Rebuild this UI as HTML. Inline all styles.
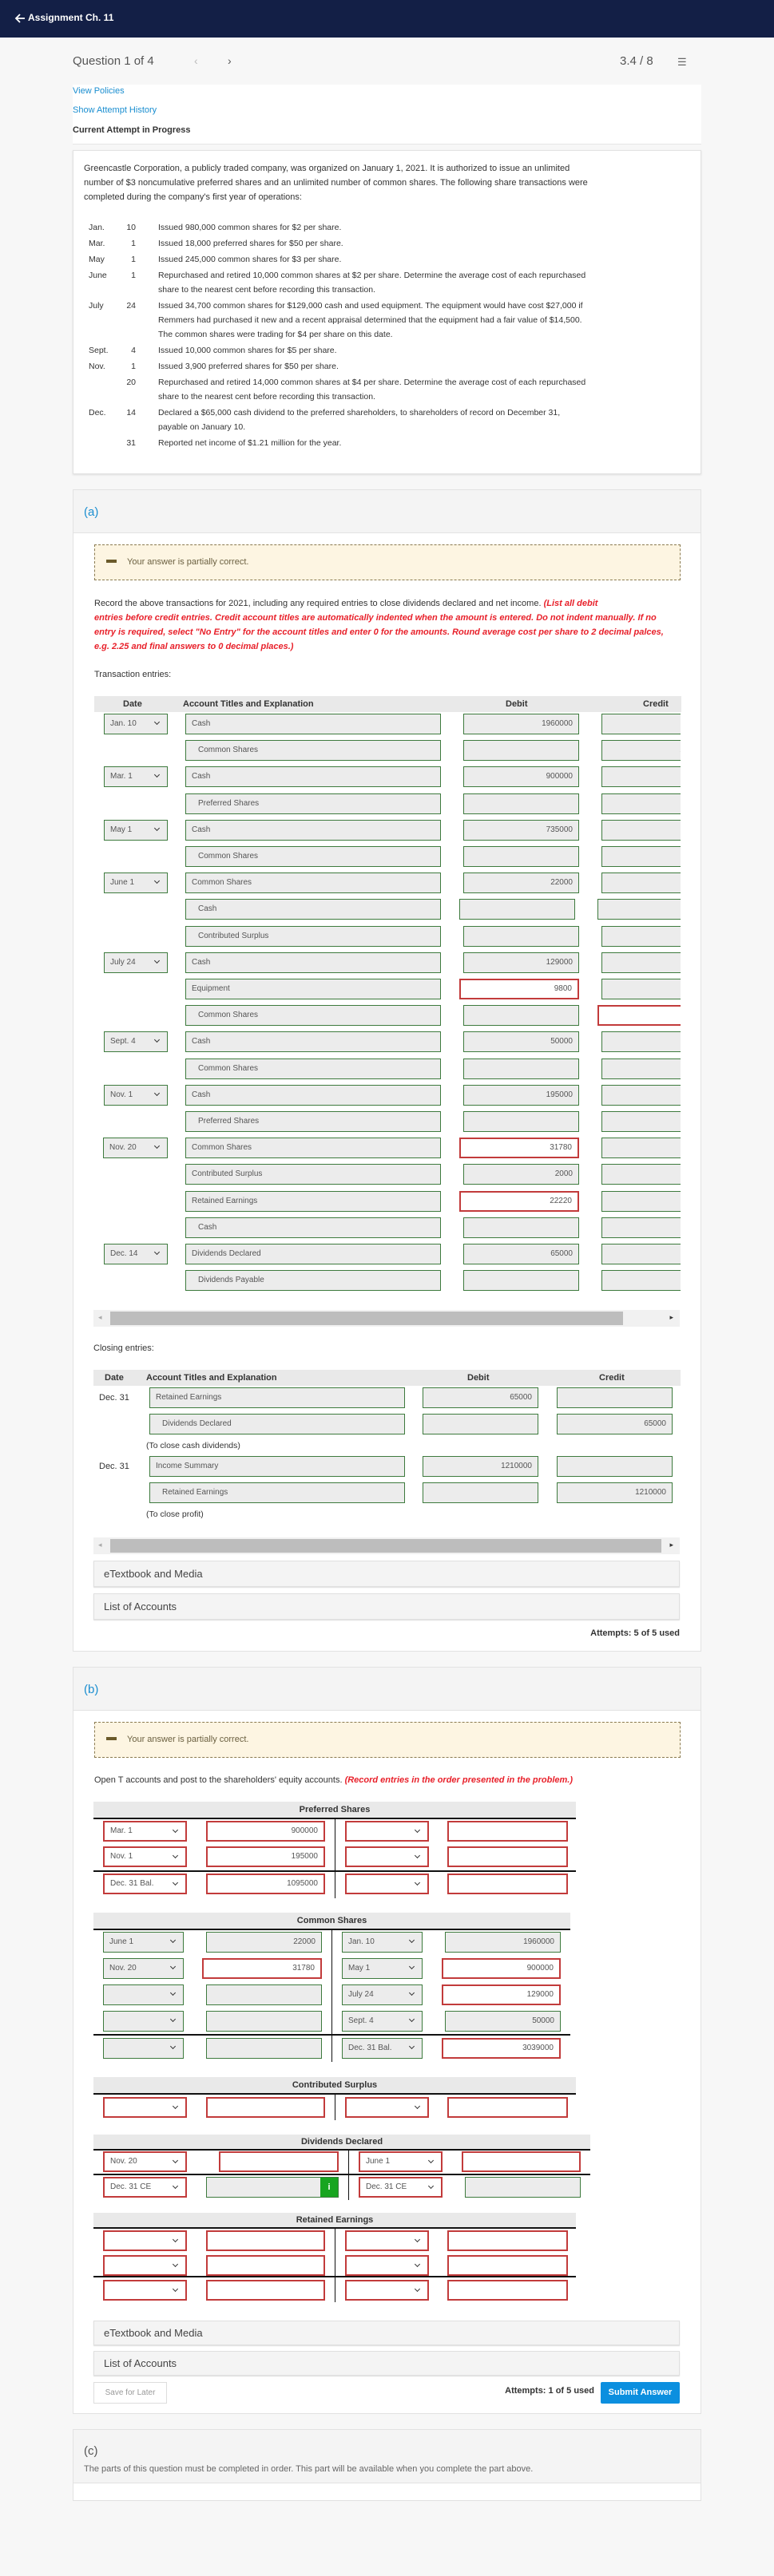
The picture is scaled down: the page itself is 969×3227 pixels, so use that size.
<!DOCTYPE html>
<html><head><meta charset="utf-8"><style>
*{margin:0;padding:0;box-sizing:border-box}
body{width:969px;height:3227px;background:#f7f7f7;font-family:"Liberation Sans",Arial,sans-serif;color:#333;position:relative;overflow:hidden}
.a{position:absolute}
.nav{left:0;top:0;width:969px;height:47px;background:#131f46;color:#fff}
.card{position:absolute;left:91px;width:787px;background:#fff;border:1px solid #e2e2e2}
.hd{position:absolute;left:0;right:0;top:0;background:#f4f4f4;border-bottom:1px solid #e2e2e2}
.in{position:absolute;height:26px;border:1px solid #3d7a3d;background:#ececec;font-size:10px;color:#555;line-height:24px;padding:0 7px;white-space:nowrap;overflow:hidden}
.r{border:2px solid #c23b3b;background:#fff;line-height:22px}
.n{text-align:right}
.ind{padding-left:15px}
.chev{position:absolute;right:10px;top:7px;width:5px;height:5px;border-right:1.6px solid #333;border-bottom:1.6px solid #333;transform:rotate(45deg)}
.partial{position:absolute;left:26px;width:734px;height:45px;border:1px dashed #8a7a50;background:#fdf5e2;font-size:11px;color:#6b6040}
.partial b{position:absolute;left:14px;top:18px;width:13px;height:4px;background:#6b5a2a}
.partial span{position:absolute;left:40px;top:15px}
.th{position:absolute;background:#e9e9e9;font-size:11px;font-weight:bold;height:20px;line-height:20px}
.tt{position:absolute;background:#e9e9e9;border-bottom:2px solid #111;font-size:11px;font-weight:bold;text-align:center;line-height:20px}
.vl{position:absolute;width:1px;background:#111}
.hl{position:absolute;height:2px;background:#111}
.acc{position:absolute;left:26px;width:734px;background:#f4f4f4;border:1px solid #e0e0e0;font-size:13px;color:#444;padding-left:12px;box-shadow:0 1px 1px #ddd}
.sb{position:absolute;left:26px;width:734px;height:21px;background:#f1f1f1}
.sb i{position:absolute;left:21px;top:2px;height:17px;background:#bdbdbd}
.tx{font-size:11px;line-height:18px}
</style></head><body>
<div class="a nav"><svg class="a" style="left:18px;top:16px" width="14" height="14" viewBox="0 0 14 14"><path d="M13 7H2M7 2L2 7l5 5" stroke="#fff" stroke-width="1.8" fill="none"/></svg><div class="a" style="left:35px;top:15px;font-size:12px;font-weight:bold">Assignment Ch. 11</div></div>
<div class="a" style="left:91px;top:68px;font-size:15px;color:#555">Question 1 of 4</div>
<div class="a" style="left:243px;top:68px;font-size:14px;color:#bbb">‹</div>
<div class="a" style="left:285px;top:68px;font-size:14px;color:#555">›</div>
<div class="a" style="left:776px;top:68px;font-size:15px;color:#555">3.4 / 8</div>
<div class="a" style="left:848px;top:70px;font-size:13px;color:#666">☰</div>
<div class="a" style="left:91px;top:106px;width:787px;height:75px;background:#fff;border-bottom:1px solid #e6e6e6"></div>
<div class="a" style="left:91px;top:108px;font-size:11px;color:#1a8ed0">View Policies</div>
<div class="a" style="left:91px;top:132px;font-size:11px;color:#1a8ed0">Show Attempt History</div>
<div class="a" style="left:91px;top:157px;font-size:11px;font-weight:bold;color:#333">Current Attempt in Progress</div>

<div class="card" style="top:188px;height:406px;box-shadow:0 1px 2px #ddd">
<div class="a tx" style="left:13px;top:13px;white-space:nowrap">Greencastle Corporation, a publicly traded company, was organized on January 1, 2021. It is authorized to issue an unlimited<br>number of $3 noncumulative preferred shares and an unlimited number of common shares. The following share transactions were<br>completed during the company's first year of operations:</div>
<div class="a" style="left:19px;top:87px;font-size:10.5px;line-height:18px;white-space:nowrap">
<div style="position:relative;height:20px"><span class="a">Jan.</span><span class="a" style="left:39px;width:20px;text-align:right">10</span><span class="a" style="left:87px">Issued 980,000 common shares for $2 per share.</span></div>
<div style="position:relative;height:20px"><span class="a">Mar.</span><span class="a" style="left:39px;width:20px;text-align:right">1</span><span class="a" style="left:87px">Issued 18,000 preferred shares for $50 per share.</span></div>
<div style="position:relative;height:20px"><span class="a">May</span><span class="a" style="left:39px;width:20px;text-align:right">1</span><span class="a" style="left:87px">Issued 245,000 common shares for $3 per share.</span></div>
<div style="position:relative;height:38px"><span class="a">June</span><span class="a" style="left:39px;width:20px;text-align:right">1</span><span class="a" style="left:87px">Repurchased and retired 10,000 common shares at $2 per share. Determine the average cost of each repurchased<br>share to the nearest cent before recording this transaction.</span></div>
<div style="position:relative;height:56px"><span class="a">July</span><span class="a" style="left:39px;width:20px;text-align:right">24</span><span class="a" style="left:87px">Issued 34,700 common shares for $129,000 cash and used equipment. The equipment would have cost $27,000 if<br>Remmers had purchased it new and a recent appraisal determined that the equipment had a fair value of $14,500.<br>The common shares were trading for $4 per share on this date.</span></div>
<div style="position:relative;height:20px"><span class="a">Sept.</span><span class="a" style="left:39px;width:20px;text-align:right">4</span><span class="a" style="left:87px">Issued 10,000 common shares for $5 per share.</span></div>
<div style="position:relative;height:20px"><span class="a">Nov.</span><span class="a" style="left:39px;width:20px;text-align:right">1</span><span class="a" style="left:87px">Issued 3,900 preferred shares for $50 per share.</span></div>
<div style="position:relative;height:38px"><span class="a" style="left:39px;width:20px;text-align:right">20</span><span class="a" style="left:87px">Repurchased and retired 14,000 common shares at $4 per share. Determine the average cost of each repurchased<br>share to the nearest cent before recording this transaction.</span></div>
<div style="position:relative;height:38px"><span class="a">Dec.</span><span class="a" style="left:39px;width:20px;text-align:right">14</span><span class="a" style="left:87px">Declared a $65,000 cash dividend to the preferred shareholders, to shareholders of record on December 31,<br>payable on January 10.</span></div>
<div style="position:relative;height:20px"><span class="a" style="left:39px;width:20px;text-align:right">31</span><span class="a" style="left:87px">Reported net income of $1.21 million for the year.</span></div>
</div>
</div>

<!-- (a) -->
<div class="card" style="top:613px;height:1456px">
<div class="hd" style="height:54px"><div class="a" style="left:13px;top:19px;font-size:15px;color:#1a8ed0">(a)</div></div>
<div class="partial" style="top:68px"><b></b><span>Your answer is partially correct.</span></div>
<div class="a tx" style="left:26px;top:133px;width:740px;white-space:nowrap">Record the above transactions for 2021, including any required entries to close dividends declared and net income. <i style="color:#e8202a;font-weight:bold">(List all debit<br>entries before credit entries. Credit account titles are automatically indented when the amount is entered. Do not indent manually. If no<br>entry is required, select "No Entry" for the account titles and enter 0 for the amounts. Round average cost per share to 2 decimal palces,<br>e.g. 2.25 and final answers to 0 decimal places.)</i></div>
<div class="a" style="left:26px;top:225px;font-size:11px">Transaction entries:</div>
<div class="th" style="left:26px;top:258px;width:735px"><span class="a" style="left:36px">Date</span><span class="a" style="left:111px">Account Titles and Explanation</span><span class="a" style="left:515px">Debit</span><span class="a" style="left:687px">Credit</span></div>
</div>

<div id="tr">
<div class="in" style="left:130px;top:894px;width:80px">Jan. 10<i class="chev"></i></div><div class="in" style="left:232px;top:894px;width:320px">Cash</div><div class="in n" style="left:580px;top:894px;width:145px">1960000</div>
<div class="in ind" style="left:232px;top:927px;width:320px">Common Shares</div><div class="in" style="left:580px;top:927px;width:145px"></div>
<div class="in" style="left:130px;top:960px;width:80px">Mar. 1<i class="chev"></i></div><div class="in" style="left:232px;top:960px;width:320px">Cash</div><div class="in n" style="left:580px;top:960px;width:145px">900000</div>
<div class="in ind" style="left:232px;top:994px;width:320px">Preferred Shares</div><div class="in" style="left:580px;top:994px;width:145px"></div>
<div class="in" style="left:130px;top:1027px;width:80px">May 1<i class="chev"></i></div><div class="in" style="left:232px;top:1027px;width:320px">Cash</div><div class="in n" style="left:580px;top:1027px;width:145px">735000</div>
<div class="in ind" style="left:232px;top:1060px;width:320px">Common Shares</div><div class="in" style="left:580px;top:1060px;width:145px"></div>
<div class="in" style="left:130px;top:1093px;width:80px">June 1<i class="chev"></i></div><div class="in" style="left:232px;top:1093px;width:320px">Common Shares</div><div class="in n" style="left:580px;top:1093px;width:145px">22000</div>
<div class="in ind" style="left:232px;top:1126px;width:320px">Cash</div><div class="in" style="left:575px;top:1126px;width:145px"></div>
<div class="in ind" style="left:232px;top:1160px;width:320px">Contributed Surplus</div><div class="in" style="left:580px;top:1160px;width:145px"></div>
<div class="in" style="left:130px;top:1193px;width:80px">July 24<i class="chev"></i></div><div class="in" style="left:232px;top:1193px;width:320px">Cash</div><div class="in n" style="left:580px;top:1193px;width:145px">129000</div>
<div class="in" style="left:232px;top:1226px;width:320px">Equipment</div><div class="in n r" style="left:575px;top:1226px;width:150px">9800</div>
<div class="in ind" style="left:232px;top:1259px;width:320px">Common Shares</div><div class="in" style="left:580px;top:1259px;width:145px"></div>
<div class="in" style="left:130px;top:1292px;width:80px">Sept. 4<i class="chev"></i></div><div class="in" style="left:232px;top:1292px;width:320px">Cash</div><div class="in n" style="left:580px;top:1292px;width:145px">50000</div>
<div class="in ind" style="left:232px;top:1326px;width:320px">Common Shares</div><div class="in" style="left:580px;top:1326px;width:145px"></div>
<div class="in" style="left:130px;top:1359px;width:80px">Nov. 1<i class="chev"></i></div><div class="in" style="left:232px;top:1359px;width:320px">Cash</div><div class="in n" style="left:580px;top:1359px;width:145px">195000</div>
<div class="in ind" style="left:232px;top:1392px;width:320px">Preferred Shares</div><div class="in" style="left:580px;top:1392px;width:145px"></div>
<div class="in" style="left:129px;top:1425px;width:81px">Nov. 20<i class="chev"></i></div><div class="in" style="left:232px;top:1425px;width:320px">Common Shares</div><div class="in n r" style="left:575px;top:1425px;width:150px">31780</div>
<div class="in" style="left:232px;top:1458px;width:320px">Contributed Surplus</div><div class="in n" style="left:580px;top:1458px;width:145px">2000</div>
<div class="in" style="left:232px;top:1492px;width:320px">Retained Earnings</div><div class="in n r" style="left:575px;top:1492px;width:150px">22220</div>
<div class="in ind" style="left:232px;top:1525px;width:320px">Cash</div><div class="in" style="left:580px;top:1525px;width:145px"></div>
<div class="in" style="left:130px;top:1558px;width:80px">Dec. 14<i class="chev"></i></div><div class="in" style="left:232px;top:1558px;width:320px">Dividends Declared</div><div class="in n" style="left:580px;top:1558px;width:145px">65000</div>
<div class="in ind" style="left:232px;top:1591px;width:320px">Dividends Payable</div><div class="in" style="left:580px;top:1591px;width:145px"></div>
<div class="a" style="left:748px;top:890px;width:104px;height:730px;overflow:hidden">
<div class="in n" style="left:5px;top:4px;width:145px"></div>
<div class="in n" style="left:5px;top:37px;width:145px">1960000</div>
<div class="in n" style="left:5px;top:70px;width:145px"></div>
<div class="in n" style="left:5px;top:104px;width:145px">900000</div>
<div class="in n" style="left:5px;top:137px;width:145px"></div>
<div class="in n" style="left:5px;top:170px;width:145px">735000</div>
<div class="in n" style="left:5px;top:203px;width:145px"></div>
<div class="in n" style="left:0px;top:236px;width:145px">20000</div>
<div class="in n" style="left:5px;top:270px;width:145px"></div>
<div class="in n" style="left:5px;top:303px;width:145px"></div>
<div class="in n" style="left:5px;top:336px;width:145px"></div>
<div class="in n r" style="left:0px;top:369px;width:150px">138800</div>
<div class="in n" style="left:5px;top:402px;width:145px"></div>
<div class="in n" style="left:5px;top:436px;width:145px"></div>
<div class="in n" style="left:5px;top:469px;width:145px"></div>
<div class="in n" style="left:5px;top:502px;width:145px">195000</div>
<div class="in n" style="left:5px;top:535px;width:145px"></div>
<div class="in n" style="left:5px;top:568px;width:145px"></div>
<div class="in n" style="left:5px;top:602px;width:145px"></div>
<div class="in n" style="left:5px;top:635px;width:145px"></div>
<div class="in n" style="left:5px;top:668px;width:145px"></div>
<div class="in n" style="left:5px;top:701px;width:145px"></div>
</div>
</div>

<div class="sb" style="left:117px;top:1641px"><i style="width:642px"></i><span class="a" style="left:6px;top:4px;font-size:9px;color:#aaa">◂</span><span class="a" style="right:8px;top:4px;font-size:9px;color:#333">▸</span></div>
<div class="a" style="left:117px;top:1683px;font-size:11px">Closing entries:</div>
<div class="th" style="left:117px;top:1716px;width:735px"><span class="a" style="left:14px">Date</span><span class="a" style="left:66px">Account Titles and Explanation</span><span class="a" style="left:468px">Debit</span><span class="a" style="left:633px">Credit</span></div>
<div class="a" style="left:124px;top:1745px;font-size:11px">Dec. 31</div>
<div class="in" style="left:187px;top:1738px;width:320px">Retained Earnings</div><div class="in n" style="left:529px;top:1738px;width:145px">65000</div><div class="in" style="left:697px;top:1738px;width:145px"></div>
<div class="in ind" style="left:187px;top:1771px;width:320px">Dividends Declared</div><div class="in" style="left:529px;top:1771px;width:145px"></div><div class="in n" style="left:697px;top:1771px;width:145px">65000</div>
<div class="a" style="left:183px;top:1805px;font-size:10.5px">(To close cash dividends)</div>
<div class="a" style="left:124px;top:1831px;font-size:11px">Dec. 31</div>
<div class="in" style="left:187px;top:1824px;width:320px">Income Summary</div><div class="in n" style="left:529px;top:1824px;width:145px">1210000</div><div class="in" style="left:697px;top:1824px;width:145px"></div>
<div class="in ind" style="left:187px;top:1857px;width:320px">Retained Earnings</div><div class="in" style="left:529px;top:1857px;width:145px"></div><div class="in n" style="left:697px;top:1857px;width:145px">1210000</div>
<div class="a" style="left:183px;top:1891px;font-size:10.5px">(To close profit)</div>
<div class="sb" style="left:117px;top:1926px"><i style="width:690px"></i><span class="a" style="left:6px;top:4px;font-size:9px;color:#aaa">◂</span><span class="a" style="right:8px;top:4px;font-size:9px;color:#333">▸</span></div>
<div class="acc" style="left:117px;top:1955px;height:33px;line-height:31px">eTextbook and Media</div>
<div class="acc" style="left:117px;top:1996px;height:33px;line-height:31px">List of Accounts</div>
<div class="a" style="left:700px;top:2040px;width:151px;text-align:right;font-size:11px;font-weight:bold;color:#333">Attempts: 5 of 5 used</div>

<!-- (b) -->
<div class="card" style="top:2088px;height:936px">
<div class="hd" style="height:54px"><div class="a" style="left:13px;top:19px;font-size:15px;color:#1a8ed0">(b)</div></div>
<div class="partial" style="top:68px"><b></b><span>Your answer is partially correct.</span></div>
<div class="a" style="left:26px;top:135px;font-size:11px;white-space:nowrap">Open T accounts and post to the shareholders' equity accounts. <i style="color:#e8202a;font-weight:bold">(Record entries in the order presented in the problem.)</i></div>
</div>
<!-- Preferred -->
<div class="tt" style="left:117px;top:2257px;width:604px;height:22px">Preferred Shares</div>
<div class="vl" style="left:419px;top:2279px;height:99px"></div><div class="hl" style="left:117px;top:2343px;width:604px"></div>
<div class="in r" style="left:129px;top:2281px;width:105px">Mar. 1<i class="chev"></i></div><div class="in r n" style="left:258px;top:2281px;width:149px">900000</div><div class="in r" style="left:432px;top:2281px;width:105px"><i class="chev"></i></div><div class="in r" style="left:560px;top:2281px;width:151px"></div>
<div class="in r" style="left:129px;top:2313px;width:105px">Nov. 1<i class="chev"></i></div><div class="in r n" style="left:258px;top:2313px;width:149px">195000</div><div class="in r" style="left:432px;top:2313px;width:105px"><i class="chev"></i></div><div class="in r" style="left:560px;top:2313px;width:151px"></div>
<div class="in r" style="left:129px;top:2347px;width:105px">Dec. 31 Bal.<i class="chev"></i></div><div class="in r n" style="left:258px;top:2347px;width:149px">1095000</div><div class="in r" style="left:432px;top:2347px;width:105px"><i class="chev"></i></div><div class="in r" style="left:560px;top:2347px;width:151px"></div>
<!-- Common -->
<div class="tt" style="left:117px;top:2396px;width:597px;height:22px">Common Shares</div>
<div class="vl" style="left:415px;top:2418px;height:165px"></div><div class="hl" style="left:117px;top:2548px;width:597px"></div>
<div class="in" style="left:129px;top:2420px;width:101px">June 1<i class="chev"></i></div><div class="in n" style="left:258px;top:2420px;width:145px">22000</div><div class="in" style="left:428px;top:2420px;width:101px">Jan. 10<i class="chev"></i></div><div class="in n" style="left:557px;top:2420px;width:145px">1960000</div>
<div class="in" style="left:129px;top:2453px;width:101px">Nov. 20<i class="chev"></i></div><div class="in r n" style="left:253px;top:2453px;width:150px">31780</div><div class="in" style="left:428px;top:2453px;width:101px">May 1<i class="chev"></i></div><div class="in r n" style="left:553px;top:2453px;width:149px">900000</div>
<div class="in" style="left:129px;top:2486px;width:101px"><i class="chev"></i></div><div class="in" style="left:258px;top:2486px;width:145px"></div><div class="in" style="left:428px;top:2486px;width:101px">July 24<i class="chev"></i></div><div class="in r n" style="left:553px;top:2486px;width:149px">129000</div>
<div class="in" style="left:129px;top:2519px;width:101px"><i class="chev"></i></div><div class="in" style="left:258px;top:2519px;width:145px"></div><div class="in" style="left:428px;top:2519px;width:101px">Sept. 4<i class="chev"></i></div><div class="in n" style="left:557px;top:2519px;width:145px">50000</div>
<div class="in" style="left:129px;top:2553px;width:101px"><i class="chev"></i></div><div class="in" style="left:258px;top:2553px;width:145px"></div><div class="in" style="left:428px;top:2553px;width:101px">Dec. 31 Bal.<i class="chev"></i></div><div class="in r n" style="left:553px;top:2553px;width:149px">3039000</div>
<!-- Contributed -->
<div class="tt" style="left:117px;top:2602px;width:604px;height:22px">Contributed Surplus</div>
<div class="vl" style="left:419px;top:2624px;height:32px"></div>
<div class="in r" style="left:129px;top:2627px;width:105px"><i class="chev"></i></div><div class="in r" style="left:258px;top:2627px;width:149px"></div><div class="in r" style="left:432px;top:2627px;width:105px"><i class="chev"></i></div><div class="in r" style="left:560px;top:2627px;width:151px"></div>
<!-- Dividends -->
<div class="tt" style="left:117px;top:2674px;width:622px;height:20px;line-height:18px">Dividends Declared</div>
<div class="vl" style="left:436px;top:2694px;height:62px"></div><div class="hl" style="left:117px;top:2723px;width:622px"></div>
<div class="in r" style="left:129px;top:2695px;width:105px">Nov. 20<i class="chev"></i></div><div class="in r" style="left:274px;top:2695px;width:150px"></div><div class="in r" style="left:449px;top:2695px;width:105px">June 1<i class="chev"></i></div><div class="in r" style="left:578px;top:2695px;width:149px"></div>
<div class="in r" style="left:129px;top:2727px;width:105px">Dec. 31 CE<i class="chev"></i></div><div class="in" style="left:258px;top:2727px;width:166px"><span class="a" style="right:0;top:0;width:22px;height:24px;background:#18a520;color:#fff;font-weight:bold;text-align:center;font-size:11px">i</span></div><div class="in r" style="left:449px;top:2727px;width:105px">Dec. 31 CE<i class="chev"></i></div><div class="in" style="left:582px;top:2727px;width:145px"></div>
<!-- Retained -->
<div class="tt" style="left:117px;top:2772px;width:604px;height:20px;line-height:18px">Retained Earnings</div>
<div class="vl" style="left:419px;top:2792px;height:92px"></div><div class="hl" style="left:117px;top:2851px;width:604px"></div>
<div class="in r" style="left:129px;top:2794px;width:105px"><i class="chev"></i></div><div class="in r" style="left:258px;top:2794px;width:149px"></div><div class="in r" style="left:432px;top:2794px;width:105px"><i class="chev"></i></div><div class="in r" style="left:560px;top:2794px;width:151px"></div>
<div class="in r" style="left:129px;top:2825px;width:105px"><i class="chev"></i></div><div class="in r" style="left:258px;top:2825px;width:149px"></div><div class="in r" style="left:432px;top:2825px;width:105px"><i class="chev"></i></div><div class="in r" style="left:560px;top:2825px;width:151px"></div>
<div class="in r" style="left:129px;top:2856px;width:105px"><i class="chev"></i></div><div class="in r" style="left:258px;top:2856px;width:149px"></div><div class="in r" style="left:432px;top:2856px;width:105px"><i class="chev"></i></div><div class="in r" style="left:560px;top:2856px;width:151px"></div>

<div class="acc" style="left:117px;top:2907px;height:31px;line-height:29px">eTextbook and Media</div>
<div class="acc" style="left:117px;top:2945px;height:31px;line-height:29px">List of Accounts</div>
<div class="a" style="left:117px;top:2984px;width:92px;height:27px;border:1px solid #ddd;background:#fff;font-size:10px;color:#999;text-align:center;line-height:25px">Save for Later</div>
<div class="a" style="left:600px;top:2989px;width:144px;text-align:right;font-size:11px;font-weight:bold">Attempts: 1 of 5 used</div>
<div class="a" style="left:752px;top:2984px;width:99px;height:27px;background:#0b8fdf;border-radius:2px;color:#fff;font-size:11px;font-weight:bold;text-align:center;line-height:27px">Submit Answer</div>

<!-- (c) -->
<div class="card" style="top:3043px;height:90px">
<div class="hd" style="height:67px"><div class="a" style="left:13px;top:18px;font-size:15px;color:#555">(c)</div><div class="a" style="left:13px;top:43px;font-size:11px;color:#666;white-space:nowrap">The parts of this question must be completed in order. This part will be available when you complete the part above.</div></div>
</div>
</body></html>
